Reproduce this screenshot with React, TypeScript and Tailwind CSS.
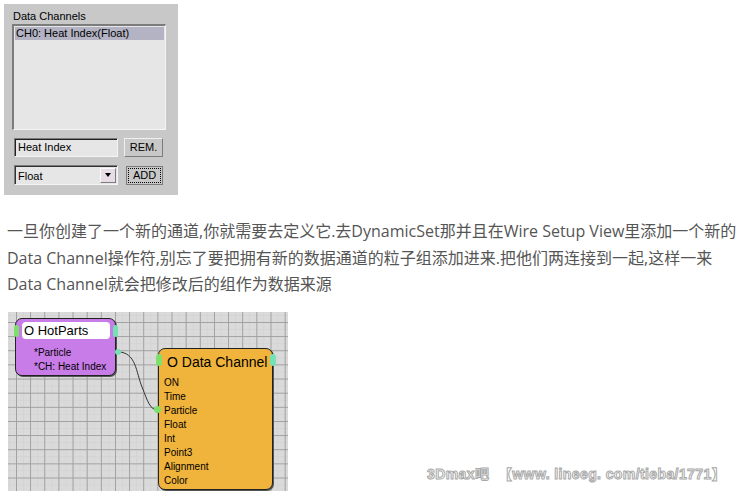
import React from "react";

const ui = { fontFamily: '"Liberation Sans", Arial, sans-serif' };

function Port({ className }: { className: string }) {
  return <div className={"absolute rounded-full " + className} />;
}

export default function App() {
  const dcItems = ["ON", "Time", "Particle", "Float", "Int", "Point3", "Alignment", "Color"];
  return (
    <div className="relative w-[749px] h-[491px] bg-white overflow-hidden flex flex-col">
      {/* Top panel */}
      <div className="pt-[4px] pl-[4px]">
        <div
          className="w-[174px] h-[191px] bg-[#c8c8c8] pl-[8px] pt-[4px] flex flex-col text-[11px] text-black"
          style={ui}
        >
          <div className="h-[16px] pl-[1px] leading-[16px]">Data Channels</div>
          <div className="w-[154px] h-[106px] bg-[#e6e6e6] border-t-2 border-l-2 border-t-[#7c7c7c] border-l-[#7c7c7c] border-r border-b border-r-[#f4f4f4] border-b-[#f4f4f4] p-[1px]">
            <div className="h-[13px] bg-[#b3b3c3] leading-[13px] pl-[1px]">CH0: Heat Index(Float)</div>
          </div>
          <div className="mt-[8px] flex items-center">
            <div className="ml-[2px] w-[104px] h-[19px] bg-[#e6e6e6] border border-t-[#7c7c7c] border-l-[#7c7c7c] border-r-[#f4f4f4] border-b-[#f4f4f4] shadow-[inset_1px_1px_0_#202020] pl-[3px] leading-[16px]">
              Heat Index
            </div>
            <div className="ml-[6px] w-[39px] h-[19px] bg-[#c8c8c8] border border-t-[#f0f0f0] border-l-[#f0f0f0] border-r-[#7c7c7c] border-b-[#7c7c7c] flex items-center justify-center leading-none">
              REM.
            </div>
          </div>
          <div className="mt-[8px] flex items-center">
            <div className="ml-[2px] w-[104px] h-[20px] bg-[#e6e6e6] border border-t-[#7c7c7c] border-l-[#7c7c7c] border-r-[#f4f4f4] border-b-[#f4f4f4] shadow-[inset_1px_1px_0_#303030] flex items-center justify-between pl-[3px] pr-[1px]">
              <span className="leading-none mt-[2px]">Float</span>
              <div className="w-[16px] h-[15px] bg-[#e8dce6] border border-t-[#fafafa] border-l-[#fafafa] border-r-[#7c7c7c] border-b-[#7c7c7c] flex items-center justify-center">
                <div className="w-0 h-0 border-l-[3.5px] border-r-[3.5px] border-t-[4px] border-l-transparent border-r-transparent border-t-black" />
              </div>
            </div>
            <div className="ml-[8px] w-[37px] h-[19px] bg-[#c8c8c8] border border-[#7c7c7c] p-[1px]">
              <div className="w-full h-full border border-dotted border-black flex items-center justify-center leading-none">
                ADD
              </div>
            </div>
          </div>
        </div>
      </div>

      {/* Paragraph */}
      <div
        className="mt-[23px] pl-[7px] text-[16px] leading-[26.5px] text-[#555555] whitespace-nowrap"
        style={{ fontFamily: '"Open Sans", "Noto Sans CJK SC", sans-serif' }}
      >
        <div>一旦你创建了一个新的通道,你就需要去定义它.去DynamicSet那并且在Wire Setup View里添加一个新的</div>
        <div>Data Channel操作符,别忘了要把拥有新的数据通道的粒子组添加进来.把他们两连接到一起,这样一来</div>
        <div>Data Channel就会把修改后的组作为数据来源</div>
      </div>

      {/* Diagram */}
      <div className="pl-[8px] pt-[14.5px]">
        <div
          className="relative w-[280px] h-[179px] bg-[#dadada] bg-[linear-gradient(to_right,#a0a0a0_1px,transparent_1px),linear-gradient(to_bottom,#a0a0a0_1px,transparent_1px),linear-gradient(to_right,#d4d4d4_1px,transparent_1px),linear-gradient(to_bottom,#d4d4d4_1px,transparent_1px)] bg-[size:14.15px_14.15px,14.15px_14.15px,7.07px_7.07px,7.07px_7.07px] bg-[position:8px_10px,8px_10px,1px_3px,1px_3px]"
          style={ui}
        >
          <svg className="absolute left-0 top-0" width="280" height="179">
            <path d="M110 40 C 128 40, 128 60, 134 75 S 142 98, 150 98" stroke="#333" strokeWidth="1" fill="none" />
          </svg>

          {/* HotParts node */}
          <div className="absolute left-[7px] top-[6px] w-[101px] h-[58px] bg-[#c87ce8] border border-[#222] rounded-[7px] shadow-[1px_1px_0_#555] pt-[3px] pl-[6px] flex flex-col">
            <div className="w-[88px] h-[17px] bg-white rounded-[4px] text-[13px] leading-[17px] pl-[2px] text-black">
              O HotParts
            </div>
            <div className="pl-[12px] pt-[7px] text-[10px] leading-[14px] text-black">
              <div>*Particle</div>
              <div>*CH: Heat Index</div>
            </div>
          </div>
          <Port className="left-[6px] top-[13px] w-[5px] h-[12px] bg-[#7ee06a] rounded-[2px]" />
          <Port className="left-[105px] top-[13px] w-[5px] h-[12px] bg-[#74e2b4] rounded-[2px]" />
          <Port className="left-[107px] top-[37px] w-[6px] h-[6px] bg-[#74e2b4]" />

          {/* Data Channel node */}
          <div className="absolute left-[150px] top-[36px] w-[115px] h-[142px] bg-[#f0b33c] border border-[#222] rounded-[7px] shadow-[1px_1px_0_#555] flex flex-col pt-[4px] pl-[5px]">
            <div className="pl-[3px] text-[14px] leading-[18px] text-black">O Data Channel</div>
            <div className="pt-[5px] text-[10px] leading-[14px] text-black">
              {dcItems.map((t) => (
                <div key={t}>{t}</div>
              ))}
            </div>
          </div>
          <Port className="left-[148px] top-[42px] w-[6px] h-[12px] bg-[#7ee06a] rounded-[2px]" />
          <Port className="left-[262px] top-[42px] w-[6px] h-[12px] bg-[#74e2b4] rounded-[2px]" />
          <Port className="left-[146px] top-[94px] w-[7px] h-[7px] bg-[#7ee06a]" />
        </div>
      </div>

      {/* Watermark */}
      <div
        className="absolute left-[427px] top-[464px] text-[14px] font-bold text-white tracking-[0.4px] whitespace-nowrap [-webkit-text-stroke:1px_#a8a8a8]"
        style={{ fontFamily: '"Liberation Sans", "Noto Sans CJK SC", sans-serif' }}
      >
        3Dmax吧 &nbsp;【www. lineeg. com/tieba/1771】
      </div>
    </div>
  );
}
